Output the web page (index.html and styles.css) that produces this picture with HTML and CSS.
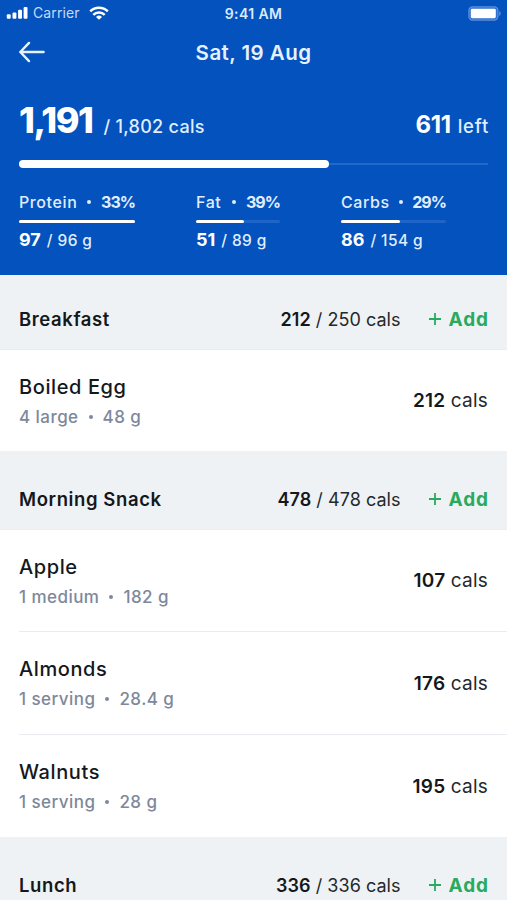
FILE: index.html
```html
<!DOCTYPE html>
<html lang="en">
<head>
    <meta charset="UTF-8">
    <meta name="viewport" content="width=device-width, initial-scale=1.0">
    <title>Food Diary</title>
    <link rel="stylesheet" href="styles.css">
</head>
<body>

<div class="app">
    <header class="summary">
        <div class="status-bar">
            <div class="carrier">
                <svg class="signal" width="22" height="13" viewBox="0 0 22 13" fill="#fff">
                    <rect x="0.8" y="8.2" width="3.9" height="4.6" rx="1"/>
                    <rect x="6.5" y="6.4" width="3.9" height="6.4" rx="1"/>
                    <rect x="12.1" y="3.8" width="3.9" height="9" rx="1"/>
                    <rect x="17.6" y="1" width="3.9" height="11.8" rx="1"/>
                </svg>
                <span class="carrier-name">Carrier</span>
                <svg class="wifi" width="20" height="14" viewBox="0 0 20 14" fill="none" stroke="#fff" stroke-width="2.5">
                    <path d="M1.2 5.3a12.6 12.6 0 0 1 17.6 0"/>
                    <path d="M4.3 8.8a8 8 0 0 1 11.4 0"/>
                    <path d="M10 13.8L7 11a4.4 4.4 0 0 1 6 0z" fill="#fff" stroke="none"/>
                </svg>
            </div>
            <span class="time">9:41 AM</span>
            <svg class="battery" width="34" height="15" viewBox="0 0 34 15">
                <rect x="0.9" y="0.9" width="29" height="13.2" rx="3.6" fill="#2f70cf" stroke="#5c90dd" stroke-width="1.2"/>
                <rect x="2.8" y="2.8" width="25" height="9.4" rx="1.4" fill="#fff"/>
                <path d="M31.2 5c2 .9 2 4.1 0 5z" fill="#5c90dd"/>
            </svg>
        </div>

        <nav class="nav">
            <svg class="back" width="26" height="22" viewBox="0 0 26 22" fill="none" stroke="#e6f1ff" stroke-width="2.4" stroke-linecap="round" stroke-linejoin="round">
                <path d="M10 1.9L1.3 11l8.7 9.1M1.3 11h23.3"/>
            </svg>
            <h1 class="date">Sat, 19 Aug</h1>
        </nav>

        <div class="calories">
            <div class="eaten"><strong>1,191</strong><span>/ 1,802 cals</span></div>
            <div class="left"><strong>611</strong><span>left</span></div>
        </div>
        <div class="progress"><div class="progress-fill" style="width: 66.2%"></div></div>

        <div class="macros">
            <div class="macro protein">
                <div class="macro-label"><span>Protein</span><i class="dot"></i><b>33%</b></div>
                <div class="macro-bar"><div class="macro-fill" style="width: 100%"></div></div>
                <div class="macro-value"><b>97</b><span>/ 96 g</span></div>
            </div>
            <div class="macro fat">
                <div class="macro-label"><span>Fat</span><i class="dot"></i><b>39%</b></div>
                <div class="macro-bar"><div class="macro-fill" style="width: 57.3%"></div></div>
                <div class="macro-value"><b>51</b><span>/ 89 g</span></div>
            </div>
            <div class="macro carbs">
                <div class="macro-label"><span>Carbs</span><i class="dot"></i><b>29%</b></div>
                <div class="macro-bar"><div class="macro-fill" style="width: 55.8%"></div></div>
                <div class="macro-value"><b>86</b><span>/ 154 g</span></div>
            </div>
        </div>
    </header>

    <section class="meal">
        <div class="meal-header first">
            <h2>Breakfast</h2>
            <span class="meal-total"><b>212</b> / 250 cals</span>
            <button class="add"><svg width="12" height="12" viewBox="0 0 12 12"><path d="M6 0v12M0 6h12"/></svg>Add</button>
        </div>
        <div class="food">
            <div class="food-text">
                <div class="food-name">Boiled Egg</div>
                <div class="food-info"><span>4 large</span><i class="dot"></i><span>48 g</span></div>
            </div>
            <div class="food-cals"><b>212</b> cals</div>
        </div>
    </section>

    <section class="meal">
        <div class="meal-header">
            <h2>Morning Snack</h2>
            <span class="meal-total"><b>478</b> / 478 cals</span>
            <button class="add"><svg width="12" height="12" viewBox="0 0 12 12"><path d="M6 0v12M0 6h12"/></svg>Add</button>
        </div>
        <div class="food">
            <div class="food-text">
                <div class="food-name">Apple</div>
                <div class="food-info"><span>1 medium</span><i class="dot"></i><span>182 g</span></div>
            </div>
            <div class="food-cals"><b>107</b> cals</div>
        </div>
        <div class="food">
            <div class="food-text">
                <div class="food-name">Almonds</div>
                <div class="food-info"><span>1 serving</span><i class="dot"></i><span>28.4 g</span></div>
            </div>
            <div class="food-cals"><b>176</b> cals</div>
        </div>
        <div class="food">
            <div class="food-text">
                <div class="food-name">Walnuts</div>
                <div class="food-info"><span>1 serving</span><i class="dot"></i><span>28 g</span></div>
            </div>
            <div class="food-cals"><b>195</b> cals</div>
        </div>
    </section>

    <section class="meal">
        <div class="meal-header">
            <h2>Lunch</h2>
            <span class="meal-total"><b>336</b> / 336 cals</span>
            <button class="add"><svg width="12" height="12" viewBox="0 0 12 12"><path d="M6 0v12M0 6h12"/></svg>Add</button>
        </div>
    </section>
</div>

</body>
</html>
```
FILE: styles.css
```css
* {
    box-sizing: border-box;
}

body {
    margin: 0;
    font-family: Inter, "Open Sans", sans-serif;
    background-color: white;
    color: #15181b;
}

.app {
    height: 900px;
    overflow: hidden;
}

/* Blue summary */
.summary {
    height: 275px;
    padding: 0 19px;
    background-color: #0352bd;
    color: white;
}

.status-bar {
    display: grid;
    grid-template-columns: 1fr auto 1fr;
    align-items: center;
    height: 26px;
    margin: 0 -13px;
    font-size: 14px;
}

.carrier {
    display: flex;
    align-items: center;
    padding-bottom: 1px;
}

.carrier-name {
    margin: 0 9px 0 5px;
    letter-spacing: 0.1px;
    color: #c5dbf8;
}

.time {
    font-size: 14px;
    font-weight: 600;
    letter-spacing: 0.4px;
    color: #dbe9fc;
}

.battery {
    justify-self: end;
    margin-right: -1px;
}

.nav {
    display: grid;
    grid-template-columns: 1fr auto 1fr;
    align-items: center;
    height: 52px;
}

.date {
    margin: 0;
    font-size: 20.5px;
    font-weight: 600;
    letter-spacing: 0.45px;
    color: #e6f1ff;
}

.calories {
    display: flex;
    justify-content: space-between;
    align-items: baseline;
    height: 82px;
    padding-top: 20px;
    font-size: 18px;
    font-weight: 500;
}

.calories span {
    letter-spacing: 0.3px;
    color: #e0eeff;
}

.eaten strong {
    margin-right: 11px;
    font-size: 36px;
    font-weight: 800;
    letter-spacing: -1.5px;
}

.left strong {
    margin-right: 7px;
    font-size: 24px;
    letter-spacing: -0.4px;
}

.left span {
    margin-right: -1px;
    font-size: 18.5px;
    letter-spacing: 0.8px;
}

.progress {
    display: flex;
    align-items: center;
    height: 8px;
    background: linear-gradient(#2268c9, #2268c9) center / 100% 2px no-repeat;
}

.progress-fill {
    height: 8px;
    border-radius: 4px;
    background-color: white;
}

.macros {
    display: flex;
    padding-top: 24px;
}

.macro {
    color: #e0eeff;
}

.protein {
    width: 116px;
    margin-right: 61px;
}

.fat {
    width: 84px;
    margin-right: 61px;
}

.carbs {
    width: 105px;
}

.macro-label {
    display: flex;
    align-items: center;
    justify-content: space-between;
    height: 20px;
    font-size: 16px;
    font-weight: 500;
    letter-spacing: 0.6px;
}

.macro-label b {
    font-weight: 700;
    letter-spacing: -1px;
}

.dot {
    width: 4px;
    height: 4px;
    border-radius: 50%;
    background-color: currentColor;
}

.macro-bar {
    height: 3px;
    margin-top: 8px;
    border-radius: 2px;
    background-color: #1d65c8;
}

.macro-fill {
    height: 3px;
    border-radius: 2px;
    background-color: white;
}

.macro-value {
    display: flex;
    align-items: baseline;
    gap: 6px;
    margin-top: 6px;
    font-size: 15.5px;
    line-height: 22px;
    font-weight: 500;
    letter-spacing: 0.4px;
}

.macro-value b {
    font-size: 18px;
    letter-spacing: 0;
    color: white;
}

/* Meals */
.meal-header {
    display: flex;
    align-items: center;
    height: 79px;
    padding: 18px 19px 0;
    background-color: #eef2f5;
    border-bottom: 1px solid #e9edf1;
}

.meal-header.first {
    height: 75px;
    padding-top: 14px;
}

.meal-header h2 {
    flex: 1;
    margin: 0;
    font-size: 18.5px;
    font-weight: 600;
    letter-spacing: 0.6px;
}

.meal-total {
    font-size: 18px;
    letter-spacing: 0.05px;
    color: #24282d;
}

.meal-total b {
    font-weight: 600;
    color: #15181b;
}

.add {
    display: flex;
    align-items: center;
    gap: 8px;
    margin-left: 28px;
    padding: 0;
    border: none;
    background: none;
    font-family: inherit;
    font-size: 19px;
    font-weight: 700;
    letter-spacing: 0.9px;
    margin-right: -1px;
    color: #2aaa5d;
    cursor: pointer;
}

.add svg {
    fill: none;
    stroke: currentColor;
    stroke-width: 1.8;
}

.food {
    display: flex;
    justify-content: space-between;
    align-items: center;
    height: 101px;
    margin-left: 19px;
    padding-right: 19px;
}

.food + .food {
    height: 103px;
    border-top: 1px solid #e8ebef;
}

.food-text {
    padding-top: 2px;
}

.food-name {
    font-size: 20px;
    line-height: 26px;
    font-weight: 450;
    letter-spacing: 0.6px;
}

.food-info {
    display: flex;
    align-items: center;
    gap: 10px;
    margin-top: 4px;
    font-size: 17px;
    line-height: 26px;
    font-weight: 500;
    letter-spacing: 0.45px;
    color: #7d889b;
}

.food-cals {
    font-size: 19px;
    letter-spacing: 0.2px;
    color: #24282d;
}

.food-cals b {
    font-weight: 600;
    color: #15181b;
}
```
